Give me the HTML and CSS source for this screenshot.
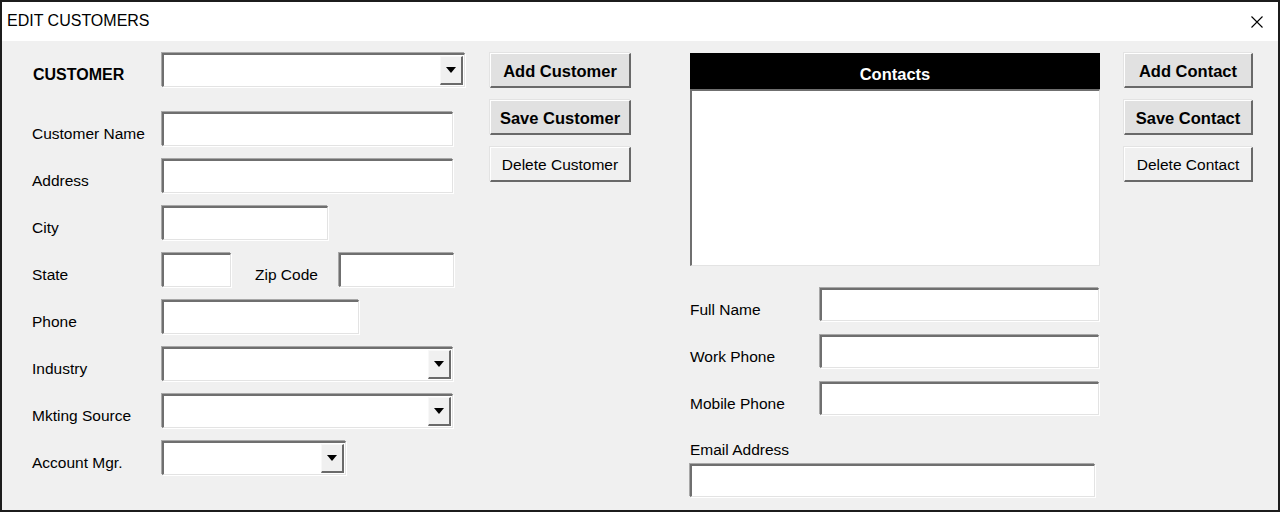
FILE: index.html
```html
<!DOCTYPE html>
<html>
<head>
<meta charset="utf-8">
<link rel="stylesheet" href="styles.css">
</head>
<body>
<div class="window">
  <div class="titlebar">
    <span class="title">EDIT CUSTOMERS</span>
    <svg class="close" width="12" height="12" viewBox="0 0 12 12"><path d="M0.5 0.5 L11.5 11.5 M11.5 0.5 L0.5 11.5" stroke="#000" stroke-width="1.1" fill="none"/></svg>
  </div>
  <div class="content">
    <div class="form">
      <div class="row first">
        <label class="lbl bold">CUSTOMER</label>
        <div class="field combo w303"><span class="drop"><i class="tri"></i></span></div>
      </div>
      <div class="row"><label class="lbl">Customer Name</label><div class="field w291"></div></div>
      <div class="row"><label class="lbl">Address</label><div class="field w291"></div></div>
      <div class="row"><label class="lbl">City</label><div class="field w166"></div></div>
      <div class="row">
        <label class="lbl">State</label><div class="field w69"></div>
        <label class="lbl zip">Zip Code</label><div class="field w115"></div>
      </div>
      <div class="row"><label class="lbl">Phone</label><div class="field w197"></div></div>
      <div class="row"><label class="lbl">Industry</label><div class="field combo w291"><span class="drop"><i class="tri"></i></span></div></div>
      <div class="row"><label class="lbl">Mkting Source</label><div class="field combo w291"><span class="drop"><i class="tri"></i></span></div></div>
      <div class="row"><label class="lbl">Account Mgr.</label><div class="field combo w184"><span class="drop"><i class="tri"></i></span></div></div>
    </div>
    <div class="buttons cust">
      <button class="btn strong">Add Customer</button>
      <button class="btn strong">Save Customer</button>
      <button class="btn">Delete Customer</button>
    </div>
    <div class="contacts">
      <div class="list-head">Contacts</div>
      <div class="listbox"></div>
      <div class="crow top"><label class="clbl">Full Name</label><div class="field w279"></div></div>
      <div class="crow"><label class="clbl">Work Phone</label><div class="field w279"></div></div>
      <div class="crow"><label class="clbl">Mobile Phone</label><div class="field w279"></div></div>
      <label class="email-lbl">Email Address</label>
      <div class="field w405"></div>
    </div>
    <div class="buttons cont">
      <button class="btn strong">Add Contact</button>
      <button class="btn strong">Save Contact</button>
      <button class="btn">Delete Contact</button>
    </div>
  </div>
</div>
</body>
</html>
```
FILE: styles.css
```css
* { box-sizing: border-box; }
html, body { margin: 0; padding: 0; }
body {
  width: 1280px;
  height: 512px;
  overflow: hidden;
  font-family: "Liberation Sans", Arial, sans-serif;
  color: #000;
}
.window {
  width: 1280px;
  height: 512px;
  border: 2px solid #1c1c1c;
  background: #f0f0f0;
  display: flex;
  flex-direction: column;
}
.titlebar {
  height: 39px;
  background: #fff;
  display: flex;
  align-items: center;
  justify-content: space-between;
  padding: 0 15px 0 5px;
  flex: none;
}
.title {
  font-size: 16px;
  margin-top: -1px;
}
.close { display: block; margin-top: 1px; }
.content {
  flex: 1;
  display: flex;
  align-items: flex-start;
  padding: 12px 0 0 30px;
}
.form {
  width: 433px;
  display: flex;
  flex-direction: column;
  gap: 13px;
}
.row {
  display: flex;
  align-items: center;
  height: 34px;
}
.row.first { margin-bottom: 12px; }
.lbl {
  width: 130px;
  font-size: 15.5px;
  flex: none;
  padding-top: 9px;
}
.lbl.bold { font-weight: bold; font-size: 16px; padding-top: 9px; padding-left: 1px; }
.lbl.zip { width: auto; margin-left: 24px; margin-right: 21px; }
.field {
  height: 34px;
  background: #fff;
  border-top: 2px solid #6f6f6f;
  border-left: 2px solid #6f6f6f;
  border-right: 1px solid #e3e3e3;
  border-bottom: 1px solid #e3e3e3;
  box-shadow: -1px -1px 0 #a8a8a8, 1px 1px 0 #ffffff;
  flex: none;
  position: relative;
}
.w303 { width: 303px; }
.w291 { width: 291px; }
.w166 { width: 166px; }
.w69 { width: 69px; }
.w115 { width: 115px; }
.w197 { width: 197px; }
.w184 { width: 184px; }
.w279 { width: 279px; height: 33px; }
.w405 { width: 405px; height: 33px; }
.combo { display: flex; justify-content: flex-end; align-items: stretch; padding: 1px 1px 1px 0; }
.drop {
  width: 23px;
  background: #f0f0f0;
  border-top: 1px solid #f8f8f8;
  border-left: 1px solid #f8f8f8;
  border-right: 2px solid #6a6a6a;
  border-bottom: 2px solid #6a6a6a;
  display: flex;
  align-items: center;
  justify-content: center;
}
.tri {
  width: 0;
  height: 0;
  border-left: 5px solid transparent;
  border-right: 5px solid transparent;
  border-top: 6px solid #000;
}
.buttons {
  display: flex;
  flex-direction: column;
  gap: 12px;
  flex: none;
}
.buttons.cust { width: 141px; margin-left: 25px; }
.buttons.cont { width: 129px; margin-left: 24px; }
.btn {
  height: 35px;
  font-family: "Liberation Sans", Arial, sans-serif;
  font-size: 15.5px;
  color: #000;
  background: #f0f0f0;
  border-top: 1px solid #ffffff;
  border-left: 1px solid #ffffff;
  border-right: 2px solid #696969;
  border-bottom: 2px solid #696969;
  box-shadow: -1px -1px 0 #e3e3e3;
  padding: 2px 0 0 0;
}
.btn.strong { font-weight: bold; font-size: 16.5px; background: #e1e1e1; }
.contacts {
  width: 410px;
  margin-left: 59px;
  display: flex;
  flex-direction: column;
  flex: none;
}
.list-head {
  height: 36px;
  background: #000;
  color: #fff;
  font-weight: bold;
  font-size: 16.5px;
  display: flex;
  align-items: center;
  justify-content: center;
  padding-top: 7px;
}
.listbox {
  height: 177px;
  background: #fff;
  border-top: 2px solid #6f6f6f;
  border-left: 2px solid #6f6f6f;
  border-right: 1px solid #e3e3e3;
  border-bottom: 1px solid #e3e3e3;
}
.crow {
  display: flex;
  align-items: center;
  height: 33px;
  margin-top: 14px;
}
.crow.top { margin-top: 22px; }
.clbl {
  width: 130px;
  font-size: 15.5px;
  padding-top: 10px;
  flex: none;
}
.email-lbl {
  font-size: 15.5px;
  margin-top: 27px;
  height: 16px;
  line-height: 16px;
  margin-bottom: 6px;
}
```
